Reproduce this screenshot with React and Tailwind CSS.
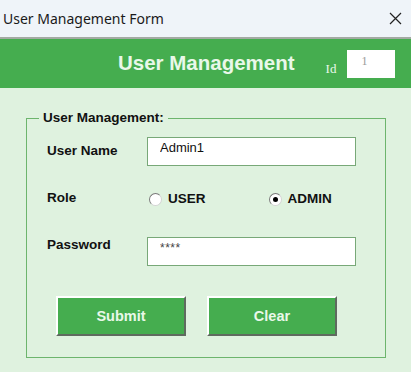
import React, { useState } from 'react';

const RadioDot = ({ checked }) => (
  <span className="relative inline-flex h-[13px] w-[13px] items-center justify-center rounded-full border border-t-[#7a7a7a] border-l-[#7a7a7a] border-r-[#d4d4d4] border-b-[#d4d4d4] bg-white">
    {checked && <span className="h-[5px] w-[5px] rounded-full bg-black" />}
  </span>
);

const App = () => {
  const [role, setRole] = useState('ADMIN');
  const [userName, setUserName] = useState('Admin1');
  const [password, setPassword] = useState('1234');

  const labelCls = "w-[100px] shrink-0 text-[13.5px] font-bold leading-[16px] text-[#111]";
  const buttonCls = "h-[40px] w-[130px] border-2 border-t-white border-l-white border-r-[#5f6a5f] border-b-[#5f6a5f] bg-[#45ad4f] pt-[2px] text-[14.5px] font-bold text-[#e9f8e9]";

  return (
    <div className="flex h-[372px] w-[411px] flex-col overflow-hidden bg-[#dff2df] font-['Liberation_Sans',Arial,sans-serif]">
      {/* window title bar */}
      <div className="flex h-[39px] shrink-0 items-center justify-between border-b-2 border-[#a3aaa3] bg-[#eff4f9] pl-[3px] pr-[9px]">
        <span className="text-[14px] leading-none text-[#1a1a1a] font-['Segoe_UI','Noto_Sans',sans-serif]">User Management Form</span>
        <svg width="13" height="13" viewBox="0 0 13 13" className="text-[#222]">
          <path d="M1 1 L12 12 M12 1 L1 12" stroke="currentColor" strokeWidth="1.2" fill="none" />
        </svg>
      </div>

      {/* green banner */}
      <div className="flex h-[49px] shrink-0 items-center bg-[#45ad4f] pl-[118px]">
        <h1 className="text-[20.5px] font-bold leading-none text-[#e9f8e9]">User Management</h1>
        <span className="ml-[31px] mt-[10px] text-[13px] leading-none text-[#e9f8e9] font-['Liberation_Serif','Times_New_Roman',serif]">Id</span>
        <div className="ml-[11px] h-[28px] w-[48px] bg-white pl-[14px] pt-[5px] text-[12px] leading-none text-[#9a9a9a] font-['Liberation_Serif','Times_New_Roman',serif]">
          1
        </div>
      </div>

      {/* group box */}
      <div className="relative ml-[26px] mt-[30px] h-[240px] w-[360px] border border-[#6db56d]">
        <span className="absolute left-[12px] top-[-9px] bg-[#dff2df] px-[4px] text-[13.5px] font-bold leading-[16px] text-[#111]">
          User Management:
        </span>

        <div className="flex flex-col pl-[20px] pt-[18px]">
          <div className="flex items-start">
            <label className={`${labelCls} mt-[6px]`}>User Name</label>
            <input
              value={userName}
              onChange={(e) => setUserName(e.target.value)}
              className="h-[29px] w-[209px] border border-[#78a878] bg-white px-[12px] pb-[8px] text-[13px] text-[#111] outline-none"
            />
          </div>

          <div className="mt-[24px] flex h-[18px] items-center">
            <label className={`${labelCls} mt-[-2px]`}>Role</label>
            <button type="button" onClick={() => setRole('USER')} className="ml-[2px] flex items-center gap-[6px]">
              <RadioDot checked={role === 'USER'} />
              <span className="text-[13.5px] font-bold leading-none text-[#111]">USER</span>
            </button>
            <button type="button" onClick={() => setRole('ADMIN')} className="ml-[63px] flex items-center gap-[6px]">
              <RadioDot checked={role === 'ADMIN'} />
              <span className="text-[13.5px] font-bold leading-none text-[#111]">ADMIN</span>
            </button>
          </div>

          <div className="mt-[29px] flex items-start">
            <label className={labelCls}>Password</label>
            {/* masked like a PasswordChar="*" textbox */}
            <input
              value={'*'.repeat(password.length)}
              onChange={(e) => setPassword(e.target.value)}
              className="h-[29px] w-[209px] border border-[#78a878] bg-white px-[12px] pb-[8px] text-[12px] tracking-[0.5px] text-[#444] outline-none"
            />
          </div>

          <div className="ml-[9px] mt-[30px] flex gap-[21px]">
            <button type="button" className={buttonCls}>
              Submit
            </button>
            <button
              type="button"
              onClick={() => { setUserName(''); setPassword(''); }}
              className={buttonCls}
            >
              Clear
            </button>
          </div>
        </div>
      </div>
    </div>
  );
};

export default App;
